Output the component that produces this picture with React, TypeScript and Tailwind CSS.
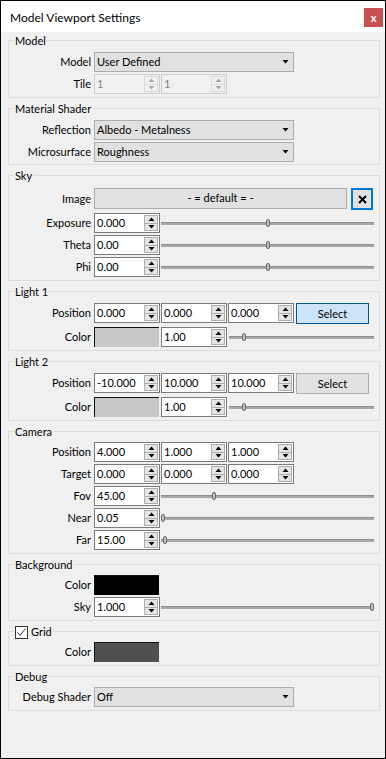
import React from 'react';
import { clsx } from 'clsx';

function Group({ title, titleNode, className, children }: { title?: string; titleNode?: React.ReactNode; className?: string; children: React.ReactNode }) {
  return (
    <div className={clsx('relative w-[372px] border border-[#dcdcdc] pr-[5px]', className)}>
      <div className="absolute -top-[7px] left-[5px] flex h-[14px] items-center bg-[#f0f0f0] px-[1px] leading-[14px]">
        {titleNode ?? title}
      </div>
      {children}
    </div>
  );
}

function Row({ label, className, children }: { label: string; className?: string; children: React.ReactNode }) {
  return (
    <div className={clsx('flex h-[20px] items-center', className)}>
      <span className="mr-[3px] w-[82px] shrink-0 text-right leading-[20px]">{label}</span>
      {children}
    </div>
  );
}

function Arrow({ up, color }: { up?: boolean; color: string }) {
  return (
    <svg width="7" height="4" viewBox="0 0 7 4">
      <polygon points={up ? '0.5,4 6.5,4 3.5,0.5' : '0.5,0 6.5,0 3.5,3.5'} fill={color} />
    </svg>
  );
}

function Spin({ value, disabled, className }: { value: string; disabled?: boolean; className?: string }) {
  return (
    <div
      className={clsx(
        'flex h-[20px] w-[66px] shrink-0 border',
        disabled ? 'border-[#cccccc] bg-[#f0f0f0] text-[#838383]' : 'border-[#7a7a7a] bg-white text-black',
        className
      )}
    >
      <span className="flex-1 pl-[2px] leading-[18px]">{value}</span>
      <div
        className={clsx(
          'my-[1px] mr-[1px] flex w-[14px] flex-col border',
          disabled ? 'border-[#d9d9d9] bg-[#f0f0f0]' : 'border-[#adadad] bg-[#e5e5e5]'
        )}
      >
        <div className={clsx('flex flex-1 items-center justify-center border-b', disabled ? 'border-[#d9d9d9]' : 'border-[#adadad]')}>
          <Arrow up color={disabled ? '#a8a8a8' : '#000'} />
        </div>
        <div className="flex flex-1 items-center justify-center">
          <Arrow color={disabled ? '#a8a8a8' : '#000'} />
        </div>
      </div>
    </div>
  );
}

function Combo({ value }: { value: string }) {
  return (
    <div className="flex h-[20px] w-[200px] shrink-0 items-center border border-[#adadad] bg-[#e1e1e1] pl-[2px] pr-[4px]">
      <span className="flex-1 leading-[18px]">{value}</span>
      <Arrow color="#000" />
    </div>
  );
}

function Slider({ pos, className }: { pos: number; className?: string }) {
  return (
    <div className={clsx('relative flex h-[20px] flex-1 items-center', className)}>
      <div className="h-[3px] w-full border-t border-[#8e8e8e] bg-[#a8a8a8]" />
      <div
        className="absolute top-[6px] h-[8px] w-[4px] rounded-[2px] border border-[#6a6a6a] bg-[#c2c2c2]"
        style={{ left: `calc(${pos} * (100% - 4px))` }}
      />
    </div>
  );
}

function Swatch({ color }: { color: string }) {
  return <div className={clsx('h-[20px] w-[65px] shrink-0 border-l border-t border-[#111]', color)} />;
}

function Select({ active }: { active?: boolean }) {
  return (
    <button
      className={clsx(
        'ml-[2px] h-[21px] w-[73px] shrink-0 border leading-[19px]',
        active ? 'border-[#005499] bg-[#cce4f7]' : 'border-[#adadad] bg-[#e1e1e1]'
      )}
    >
      Select
    </button>
  );
}

export default function App() {
  return (
    <div className="h-[759px] w-[386px] overflow-hidden border border-black bg-[#f0f0f0] font-['Segoe_UI',Lato,'Noto_Sans',sans-serif] text-[11px] text-black">
      <div className="flex h-[31px] items-center bg-white pl-[9px] pr-[2px] pt-[2px]">
        <span className="flex-1 text-[12px]">Model Viewport Settings</span>
        <div className="flex h-[19px] w-[19px] items-center justify-center bg-[#c75050] pb-[1px] text-[11px] font-bold leading-none text-white">x</div>
      </div>

      <div className="flex flex-col gap-[10px] pl-[7px] pt-[8px]">
        <Group title="Model" className="pb-[3px] pt-[11px]">
          <Row label="Model">
            <Combo value="User Defined" />
          </Row>
          <Row label="Tile" className="mt-[2px]">
            <Spin value="1" disabled />
            <Spin value="1" disabled className="ml-[1px]" />
          </Row>
        </Group>

        <Group title="Material Shader" className="pb-[2px] pt-[11px]">
          <Row label="Reflection">
            <Combo value="Albedo - Metalness" />
          </Row>
          <Row label="Microsurface" className="mt-[2px]">
            <Combo value="Roughness" />
          </Row>
        </Group>

        <Group title="Sky" className="pb-[3px] pt-[12px]">
          <div className="flex h-[22px] items-center">
            <span className="mr-[3px] w-[82px] shrink-0 text-right">Image</span>
            <div className="flex h-[21px] w-[253px] shrink-0 items-center justify-center self-start border border-[#adadad] bg-[#e1e1e1]">
              - = default = -
            </div>
            <div className="ml-[4px] flex h-[22px] w-[22px] shrink-0 items-center justify-center border-2 border-[#0078d7] bg-[#e1e1e1]">
              <svg width="9" height="9" viewBox="0 0 9 9">
                <path d="M1 1 L8 8 M8 1 L1 8" stroke="#000" strokeWidth="2" />
              </svg>
            </div>
          </div>
          <Row label="Exposure" className="mt-[3px]">
            <Spin value="0.000" />
            <Slider pos={0.5} className="ml-[1px]" />
          </Row>
          <Row label="Theta" className="mt-[2px]">
            <Spin value="0.00" />
            <Slider pos={0.5} className="ml-[1px]" />
          </Row>
          <Row label="Phi" className="mt-[2px]">
            <Spin value="0.00" />
            <Slider pos={0.5} className="ml-[1px]" />
          </Row>
        </Group>

        <Group title="Light 1" className="pb-[3px] pt-[11px]">
          <Row label="Position">
            <Spin value="0.000" />
            <Spin value="0.000" className="ml-[1px]" />
            <Spin value="0.000" className="ml-[1px]" />
            <Select active />
          </Row>
          <Row label="Color" className="mt-[4px]">
            <Swatch color="bg-[#c8c8c8]" />
            <Spin value="1.00" className="ml-[2px]" />
            <Slider pos={0.09} className="ml-[2px]" />
          </Row>
        </Group>

        <Group title="Light 2" className="pb-[3px] pt-[11px]">
          <Row label="Position">
            <Spin value="-10.000" />
            <Spin value="10.000" className="ml-[1px]" />
            <Spin value="10.000" className="ml-[1px]" />
            <Select />
          </Row>
          <Row label="Color" className="mt-[4px]">
            <Swatch color="bg-[#c8c8c8]" />
            <Spin value="1.00" className="ml-[2px]" />
            <Slider pos={0.09} className="ml-[2px]" />
          </Row>
        </Group>

        <Group title="Camera" className="pb-[3px] pt-[10px]">
          <Row label="Position">
            <Spin value="4.000" />
            <Spin value="1.000" className="ml-[1px]" />
            <Spin value="1.000" className="ml-[1px]" />
          </Row>
          <Row label="Target" className="mt-[2px]">
            <Spin value="0.000" />
            <Spin value="0.000" className="ml-[1px]" />
            <Spin value="0.000" className="ml-[1px]" />
          </Row>
          <Row label="Fov" className="mt-[2px]">
            <Spin value="45.00" />
            <Slider pos={0.244} className="ml-[1px]" />
          </Row>
          <Row label="Near" className="mt-[2px]">
            <Spin value="0.05" />
            <Slider pos={0} className="ml-[1px]" />
          </Row>
          <Row label="Far" className="mt-[2px]">
            <Spin value="15.00" />
            <Slider pos={0.01} className="ml-[1px]" />
          </Row>
        </Group>

        <Group title="Background" className="pb-[3px] pt-[10px]">
          <Row label="Color">
            <Swatch color="bg-black" />
          </Row>
          <Row label="Sky" className="mt-[2px]">
            <Spin value="1.000" />
            <Slider pos={1} className="ml-[1px]" />
          </Row>
        </Group>

        <Group
          className="pb-[3px] pt-[10px]"
          titleNode={
            <span className="flex items-center">
              <span className="mr-[3px] flex h-[13px] w-[13px] items-center justify-center border border-[#333] bg-white">
                <svg width="11" height="11" viewBox="0 0 11 11">
                  <path d="M1.5 5.5 L4 8.5 L9.5 1.5" fill="none" stroke="#333" strokeWidth="1" />
                </svg>
              </span>
              Grid
            </span>
          }
        >
          <Row label="Color">
            <Swatch color="bg-[#505050]" />
          </Row>
        </Group>

        <Group title="Debug" className="pb-[3px] pt-[10px]">
          <Row label="Debug Shader">
            <Combo value="Off" />
          </Row>
        </Group>
      </div>
    </div>
  );
}
